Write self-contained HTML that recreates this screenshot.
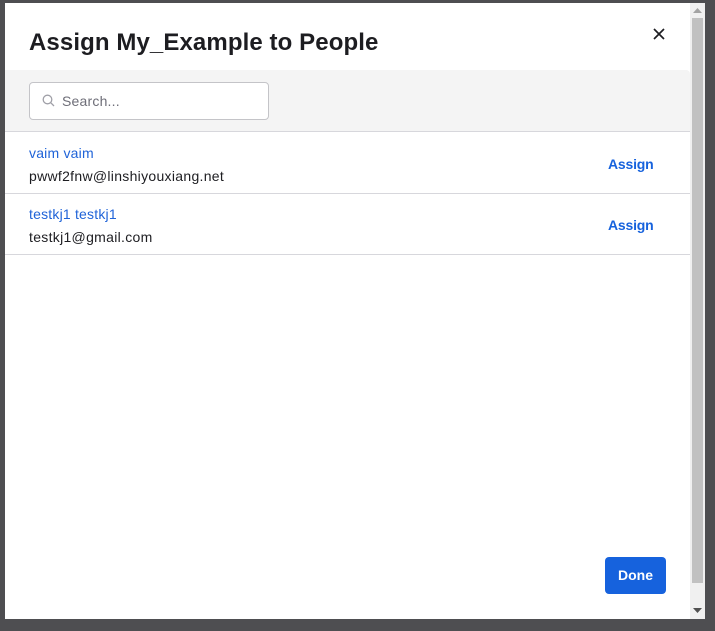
<!DOCTYPE html>
<html><head><style>
*{margin:0;padding:0;box-sizing:border-box}
body{width:715px;height:631px;background:#4e4e51;font-family:"Liberation Sans",sans-serif;position:relative;overflow:hidden}
.m{position:absolute;left:5px;top:3px;width:700px;height:616px;background:#fff}
h1{position:absolute;left:24px;top:26px;font-size:24px;font-weight:bold;color:#1d1d21;letter-spacing:0.1px}
.x{position:absolute;left:648px;top:25px}
.band{position:absolute;left:0;top:67px;width:685px;height:62px;background:#f4f4f4;border-bottom:1px solid #d7d7dc;border-top-right-radius:4px}
.s{position:absolute;left:24px;top:12px;width:240px;height:38px;border:1px solid #c4c4c8;border-radius:4px;background:#fff}
.s span{position:absolute;left:32px;top:10px;font-size:14px;color:#6e6e78;letter-spacing:0.2px}
.s svg{position:absolute;left:12px;top:11px}
.row{position:absolute;left:0;width:685px;height:61px;border-bottom:1px solid #d7d7dc}
.n{position:absolute;left:24px;top:12px;font-size:14px;color:#1f63d8;letter-spacing:0.2px}
.e{position:absolute;left:24px;top:35px;font-size:14px;color:#1d1d21;letter-spacing:0.3px}
.a{position:absolute;left:603px;top:23px;font-size:14px;font-weight:bold;color:#1662dd;letter-spacing:-0.2px}
.sb{position:absolute;left:685px;top:0;width:15px;height:616px;background:#f0f0f0}
.th{position:absolute;left:2px;top:15px;width:11px;height:565px;background:#c1c1c1}
.done{position:absolute;left:600px;top:554px;width:61px;height:37px;background:#1662dd;border-radius:4px;color:#fff;font-weight:bold;font-size:14px;text-align:center;line-height:37px}
</style></head><body>
<div class="m">
<h1>Assign My_Example to People</h1>
<svg class="x" width="12" height="12" viewBox="0 0 12 12"><path d="M1 1L11 11M11 1L1 11" stroke="#1d1d21" stroke-width="1.7"/></svg>
<div class="band"><div class="s"><svg width="13" height="13" viewBox="0 0 13 13"><circle cx="5.5" cy="5.5" r="4.3" fill="none" stroke="#a0a0a8" stroke-width="1.3"/><path d="M8.6 8.6L12 12" stroke="#a0a0a8" stroke-width="1.3"/></svg><span>Search...</span></div></div>
<div class="row" style="top:130px"><div class="n">vaim vaim</div><div class="e">pwwf2fnw@linshiyouxiang.net</div><div class="a">Assign</div></div>
<div class="row" style="top:191px"><div class="n">testkj1 testkj1</div><div class="e">testkj1@gmail.com</div><div class="a">Assign</div></div>
<div class="done">Done</div>
<div class="sb"><div class="th"></div>
<svg style="position:absolute;left:3px;top:5px" width="9" height="5"><path d="M0 5L4.5 0L9 5Z" fill="#a3a3a3"/></svg>
<svg style="position:absolute;left:3px;top:605px" width="9" height="5"><path d="M0 0L4.5 5L9 0Z" fill="#505050"/></svg>
</div>
</div>
</body></html>
